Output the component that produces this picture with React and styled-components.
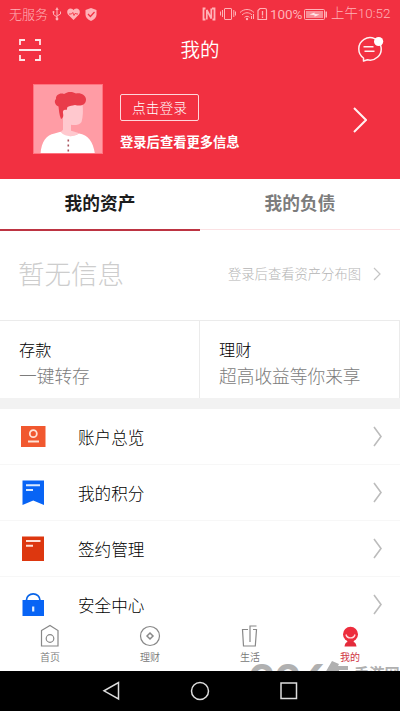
import React, { useState } from "react";
import styled, { createGlobalStyle } from "styled-components";

const GlobalStyle = createGlobalStyle`
  * {
    box-sizing: border-box;
  }

  body {
    margin: 0;
    background: #fff;
    font-family: "Noto Sans CJK SC", sans-serif;
  }
`;

const Screen = styled.div`
  display: flex;
  flex-direction: column;
  width: 400px;
  height: 711px;
  overflow: hidden;
  background: #fff;
`;

const Header = styled.header`
  height: 179px;
  flex: none;
  background: #f23041;
  color: #fff;
`;

const StatusBar = styled.div`
  display: flex;
  align-items: center;
  height: 28px;
  padding: 0 9px;
  color: #ffb3b8;
  font-size: 13px;
  line-height: 26px;
  font-weight: 300;
  white-space: nowrap;

  svg {
    display: block;
    flex: none;
  }
`;

const StatusIcons = styled.div`
  display: flex;
  align-items: center;
  gap: 5px;
  margin-left: 4px;
`;

const StatusRight = styled.div`
  display: flex;
  align-items: center;
  margin-left: auto;
`;

const Percent = styled.span`
  width: 34px;
  margin-left: 2px;
  font-family: Roboto, sans-serif;
  font-size: 13.5px;
  font-weight: 400;
  letter-spacing: -0.1px;
`;

const Clock = styled.span`
  width: 60px;
  margin-left: 3px;
  font-family: Roboto, "Noto Sans CJK SC", sans-serif;
  font-size: 13.4px;
  font-weight: 300;
`;

const TitleBar = styled.div`
  display: flex;
  align-items: center;
  justify-content: space-between;
  height: 43px;
  padding: 0 16px 0 18px;

  svg {
    display: block;
  }
`;

const Title = styled.h1`
  margin: -1px 0 0;
  padding-left: 2px;
  font-size: 19.5px;
  font-weight: 350;
  line-height: 28px;
`;

const Profile = styled.div`
  display: flex;
  align-items: flex-start;
  padding: 13px 33px 0;
`;

const ProfileText = styled.div`
  flex: 1;
  padding: 10px 0 0 17px;
`;

const LoginButton = styled.button`
  display: block;
  width: 79px;
  height: 27px;
  padding: 0 0 1px;
  border: 1px solid #ffd6da;
  border-radius: 2px;
  background: none;
  color: #fff;
  font: 300 13.7px/24px "Noto Sans CJK SC", sans-serif;
`;

const LoginHint = styled.p`
  margin: 11px 0 0;
  font-size: 13.3px;
  line-height: 20px;
  font-weight: 700;
`;

const ProfileArrow = styled.div`
  margin-top: 23px;

  svg {
    display: block;
  }
`;

const Tabs = styled.div`
  display: flex;
  flex: none;
  height: 52px;
`;

const Tab = styled.button`
  flex: 1;
  align-self: flex-start;
  height: ${(props) => (props.$active ? "52px" : "51px")};
  padding: 0 0 4px;
  border: 0;
  border-bottom: ${(props) =>
    props.$active ? "2px solid #bd3442" : "1px solid #fbe1e3"};
  background: none;
  color: ${(props) => (props.$active ? "#1c1c1c" : "#7c7c7c")};
  font: 700 17.7px/46px "Noto Sans CJK SC", sans-serif;
`;

const EmptyPanel = styled.section`
  display: flex;
  align-items: center;
  justify-content: space-between;
  flex: none;
  height: 89px;
  padding: 0 19px 4px 18px;
`;

const EmptyText = styled.span`
  margin-top: -2px;
  color: #cdcdcd;
  font-size: 26.5px;
  font-weight: 300;
`;

const EmptyLink = styled.a`
  display: flex;
  align-items: center;
  gap: 12px;
  color: #b4b4b4;
  font-size: 13.3px;
  font-weight: 300;
`;

const Products = styled.section`
  display: grid;
  grid-template-columns: 200px 200px;
  flex: none;
  height: 78px;
  border-top: 1px solid #ebebeb;
`;

const Product = styled.div`
  padding: 15px 0 0 19px;
  border-right: 1px solid #ebebeb;
`;

const ProductName = styled.div`
  color: #000;
  font-size: 16.2px;
  line-height: 26px;
  font-weight: 300;
`;

const ProductNote = styled.div`
  color: #7c7c7c;
  font-size: 17.7px;
  line-height: 27px;
  font-weight: 300;
`;

const Gap = styled.div`
  flex: none;
  height: 11px;
  background: #f2f2f2;
`;

const Menu = styled.ul`
  flex: none;
  height: 207px;
  margin: 0;
  padding: 0;
  overflow: hidden;
  list-style: none;
`;

const MenuRow = styled.li`
  display: flex;
  align-items: center;
  height: 56px;
  padding: 0 18px 0 20px;
  border-bottom: 1px solid #f7f7f7;

  svg {
    display: block;
  }
`;

const MenuLabel = styled.span`
  flex: 1;
  padding-left: 32px;
  color: #000;
  font-size: 16.6px;
  line-height: 26px;
  font-weight: 300;
`;

const BottomBar = styled.nav`
  position: relative;
  display: grid;
  grid-template-columns: repeat(4, 1fr);
  flex: none;
  height: 55px;
  overflow: hidden;
  background: #fff;
`;

const BottomItem = styled.div`
  display: flex;
  flex-direction: column;
  align-items: center;
  padding-top: 8px;
  color: ${(props) => (props.$active ? "#cf3443" : "#777")};
  font-size: 10px;
  line-height: 13px;
  font-weight: ${(props) => (props.$active ? 400 : 350)};

  svg {
    display: block;
    margin-bottom: 2px;
  }
`;

const Watermark = styled.div`
  position: absolute;
  left: 249px;
  top: 45px;
  display: flex;
  align-items: flex-start;
  color: #b0b0b0;

  svg {
    display: block;
    margin: 0 5px 0 -6px;
  }
`;

const WatermarkDigits = styled.span`
  width: 82px;
  margin-top: -1px;
  font: 900 45px/41px Lato, sans-serif;
`;

const WatermarkName = styled.span`
  margin-top: 2px;
  font-size: 15.2px;
  line-height: 19px;
  font-weight: 700;
  white-space: nowrap;
`;

const SystemNav = styled.div`
  display: flex;
  align-items: center;
  justify-content: center;
  gap: 69px;
  flex: none;
  height: 40px;
  background: #000;

  svg {
    display: block;
  }
`;

const Chevron = ({ width, height, color, stroke = 1.5 }) => (
  <svg width={width} height={height} fill="none" stroke={color} strokeWidth={stroke}>
    <path d={`M1 1L${width - 1} ${height / 2}L1 ${height - 1}`} />
  </svg>
);

const UsbIcon = () => (
  <svg width="10" height="14" fill="none" stroke="currentColor">
    <path d="M5 2v10M1.500 5v2.500L5 10M8.500 4.500v2.500L5 9" />
    <path d="M5 0L3.300 3h3.400z" fill="currentColor" stroke="none" />
    <circle cx="5" cy="12" r="1.400" fill="currentColor" stroke="none" />
    <circle cx="1.500" cy="5" r="1" fill="currentColor" stroke="none" />
  </svg>
);

const HeartIcon = () => (
  <svg width="13" height="12">
    <path
      d="M6.500 12L1 6.500C-1 3.500 1 .5 3.500 .5c1.500 0 2.500 .8 3 1.700c.5-.9 1.500-1.700 3-1.700C12 .5 14 3.500 12 6.500z"
      fill="currentColor"
    />
    <path d="M2 6h2.500l1.300-1.500l1.200 3l1.500-2.500l.8 1H11" fill="none" stroke="#f23041" strokeWidth=".9" />
  </svg>
);

const ShieldIcon = () => (
  <svg width="12" height="13">
    <path d="M6 0l5.500 2v4.500c0 3-2 5-5.500 6.500C2.500 11.500 .5 9.500 .5 6.500V2z" fill="currentColor" />
    <path d="M3 6l2.400 2.500L9.500 4" fill="none" stroke="#f23041" strokeWidth="1.200" />
  </svg>
);

const SignalIcons = () => (
  <svg width="66" height="14" fill="none" stroke="currentColor">
    <path d="M3.500 1.500H1.500v11h2M10 1.500h2.500v11h-2" strokeWidth="1.800" />
    <path d="M4.800 12.500V3l4.500 8.500V1.500" strokeWidth="1.700" />
    <rect x="22.500" y="1.500" width="7" height="11" rx=".5" />
    <path d="M20.500 3v7M18.500 4.500v4M31.800 3v7M33.500 4.500v4" />
    <path d="M38 5.500C42 1.500 48 1.500 52 5.500M40 8c3-3 7-3 10 0M42.500 10.300c1.500-1.300 3.500-1.300 5 0" />
    <circle cx="45" cy="12" r="1.200" fill="currentColor" stroke="none" />
    <path d="M49.500 9v3M51.500 7v5" />
    <path d="M58 1.500h5q1.500 0 1.500 1.500v9.500h-8.500V3.500z" strokeWidth="1.200" />
    <path d="M60.500 4v4.500M60.500 9.500v1.500" strokeWidth="1.300" />
  </svg>
);

const BatteryIcon = () => (
  <svg width="24" height="11">
    <rect x=".5" y=".5" width="20" height="10" rx="1" fill="none" stroke="currentColor" />
    <rect x="2" y="2" width="17" height="7" fill="#f98d96" />
    <rect x="21.500" y="2.500" width="1.500" height="6" fill="currentColor" />
    <path d="M5.500 5.500l5-2v1.200l5 .8l-5 2.200v-1.400z" fill="#ffe3e5" />
  </svg>
);

const ScanIcon = () => (
  <svg width="24" height="24" fill="none" stroke="#ffe4e6" strokeWidth="1.800">
    <path d="M2 7V2h5M17 2h5v5M22 17v5h-5M7 22H2v-5M1 12h22" />
  </svg>
);

const MessageIcon = () => (
  <svg width="28" height="28" fill="none" stroke="#fff0f1" strokeWidth="1.500">
    <path d="M7.500 25L7.500 22A11.200 11.200 0 1 1 11.500 23.800z" strokeLinejoin="round" />
    <path d="M7.500 10.800h10M8.500 15.300h10" />
    <circle cx="22.600" cy="5.500" r="4.600" fill="#fff" stroke="none" />
  </svg>
);

const Avatar = () => (
  <svg width="70" height="70" viewBox="0 0 70 70">
    <rect width="70" height="70" fill="#ff9ca5" />
    <path
      d="M27 20H49.500c.8 6 .5 13-1 18c-2 3-7 3.500-10.500 2.800v6q6 1.500 8 2.500c-5 4-14 4-19-.5l3-3V34l-3-6z"
      fill="#ffc8ce"
    />
    <path
      d="M28 35c-2-5-2-9-2.500-12.500c-4-1.500-4.500-6-2.500-7.500c-.5-4 4-6.500 8-5c4-3 9-2.500 12-.5c5-1 10 2 10 6c0 6-6 7-11 5.500c-3 1-5 .5-7.500 2c-.5 1-.3 2-1 3c-2.500-1-4 .5-3.500 3c.3 2 1 4.500-2 6z"
      fill="#e93c4a"
    />
    <path d="M7.500 70c1-13 6-19 14-20.500l6-1.700c4 5 12 6 18.500 1.700c9 1.500 14 7.500 16 20.500z" fill="#fff" />
    <path d="M35.300 55.500v12" stroke="#a8515b" strokeWidth="1.600" strokeDasharray="2 3" />
    <rect x=".5" y=".5" width="69" height="69" fill="none" stroke="#ff737f" />
  </svg>
);

const AccountIcon = () => (
  <svg width="26" height="26">
    <rect x="1" y="2" width="24.500" height="21" fill="#f1582f" />
    <circle cx="13.300" cy="9.700" r="3.500" fill="none" stroke="#ffe2d5" strokeWidth="1.800" />
    <path d="M8 17.500h11" stroke="#ffe2d5" strokeWidth="2" />
  </svg>
);

const PointsIcon = () => (
  <svg width="26" height="26">
    <path d="M2.500 .5H24V25l-10.800-4.500L2.500 25z" fill="#0864f5" />
    <path d="M6 5.200h14M6 10h7" stroke="#d8e8ff" strokeWidth="2" />
  </svg>
);

const ContractIcon = () => (
  <svg width="26" height="26">
    <rect x="2" y=".5" width="22" height="24.500" fill="#dd370f" />
    <path d="M6 5h14.500M6 9.700h7" stroke="#ffe0d5" strokeWidth="2" />
  </svg>
);

const LockIcon = () => (
  <svg width="26" height="26">
    <path d="M6.500 10V8a6.700 6.200 0 0 1 13.400 0v2" fill="none" stroke="#0864e8" strokeWidth="1.700" />
    <rect x="2.500" y="8" width="21.500" height="16.500" fill="#0864f5" />
    <path d="M13.200 14.500v5" stroke="#e1edff" strokeWidth="2.200" />
  </svg>
);

const HomeIcon = () => (
  <svg width="20" height="24" fill="none" stroke="#888" strokeWidth="1.200">
    <path d="M1.500 6.500L10 1.500l8 5v15.500H1.500z" />
    <circle cx="10" cy="14.500" r="3.800" />
  </svg>
);

const FinanceIcon = () => (
  <svg width="22" height="24" fill="none" stroke="#888" strokeWidth="1.200">
    <circle cx="11" cy="12" r="9.500" />
    <path d="M11 9l3 3l-3 3l-3-3z" strokeWidth="1.500" />
  </svg>
);

const LifeIcon = () => (
  <svg width="20" height="24" fill="none" stroke="#888" strokeWidth="1.200">
    <path d="M8 5.500H2.500l1 16.500h11.800L16.500 5.500H13M10 18V2h6.500" />
  </svg>
);

const MineIcon = () => (
  <svg width="20" height="24">
    <path d="M6.500 15h8l-1 3c2 .5 2.500 2 3 4.500H4.500c.5-2.500 1-4 3-4.500z" fill="#e32b3b" />
    <circle cx="10.500" cy="10.200" r="7.500" fill="#ed2d3d" />
    <path d="M6 10.500c1 4.500 8 4.500 9 0" fill="none" stroke="#ffdadd" strokeWidth="1.400" />
  </svg>
);

const menuItems = [
  { label: "账户总览", icon: <AccountIcon /> },
  { label: "我的积分", icon: <PointsIcon /> },
  { label: "签约管理", icon: <ContractIcon /> },
  { label: "安全中心", icon: <LockIcon /> },
];

const bottomItems = [
  { label: "首页", icon: <HomeIcon /> },
  { label: "理财", icon: <FinanceIcon /> },
  { label: "生活", icon: <LifeIcon /> },
  { label: "我的", icon: <MineIcon />, active: true },
];

const products = [
  { name: "存款", note: "一键转存" },
  { name: "理财", note: "超高收益等你来享" },
];

const App = () => {
  const [tab, setTab] = useState("我的资产");

  return (
    <Screen>
      <GlobalStyle />
      <Header>
        <StatusBar>
          无服务
          <StatusIcons>
            <UsbIcon />
            <HeartIcon />
            <ShieldIcon />
          </StatusIcons>
          <StatusRight>
            <SignalIcons />
            <Percent>100%</Percent>
            <BatteryIcon />
            <Clock>上午10:52</Clock>
          </StatusRight>
        </StatusBar>
        <TitleBar>
          <ScanIcon />
          <Title>我的</Title>
          <MessageIcon />
        </TitleBar>
        <Profile>
          <Avatar />
          <ProfileText>
            <LoginButton>点击登录</LoginButton>
            <LoginHint>登录后查看更多信息</LoginHint>
          </ProfileText>
          <ProfileArrow>
            <Chevron width={14} height={26} color="#fff0f1" stroke={2} />
          </ProfileArrow>
        </Profile>
      </Header>

      <Tabs>
        {["我的资产", "我的负债"].map((name) => (
          <Tab key={name} $active={tab === name} onClick={() => setTab(name)}>
            {name}
          </Tab>
        ))}
      </Tabs>

      <EmptyPanel>
        <EmptyText>暂无信息</EmptyText>
        <EmptyLink>
          登录后查看资产分布图
          <Chevron width={8} height={14} color="#c4c4c4" stroke={1.2} />
        </EmptyLink>
      </EmptyPanel>

      <Products>
        {products.map((product) => (
          <Product key={product.name}>
            <ProductName>{product.name}</ProductName>
            <ProductNote>{product.note}</ProductNote>
          </Product>
        ))}
      </Products>
      <Gap />

      <Menu>
        {menuItems.map((item) => (
          <MenuRow key={item.label}>
            {item.icon}
            <MenuLabel>{item.label}</MenuLabel>
            <Chevron width={9} height={21} color="#bcbcbc" stroke={1.6} />
          </MenuRow>
        ))}
      </Menu>

      <BottomBar>
        {bottomItems.map((item) => (
          <BottomItem key={item.label} $active={item.active}>
            {item.icon}
            {item.label}
          </BottomItem>
        ))}
        <Watermark>
          <WatermarkDigits>996</WatermarkDigits>
          <svg width="24" height="12" fill="currentColor">
            <path d="M7 0L14 3L13 5h10v4h-9v3H0z" />
          </svg>
          <WatermarkName>手游网</WatermarkName>
        </Watermark>
      </BottomBar>

      <SystemNav>
        <svg width="20" height="20" fill="none" stroke="#ddd" strokeWidth="1.500">
          <path d="M17.500 1.500v16.500L3 9.800z" />
        </svg>
        <svg width="20" height="20" fill="none" stroke="#ddd" strokeWidth="1.500">
          <circle cx="10" cy="10" r="8.500" />
        </svg>
        <svg width="20" height="20" fill="none" stroke="#ddd" strokeWidth="1.500">
          <rect x="2" y="2" width="15.500" height="15.500" />
        </svg>
      </SystemNav>
    </Screen>
  );
};

export default App;
